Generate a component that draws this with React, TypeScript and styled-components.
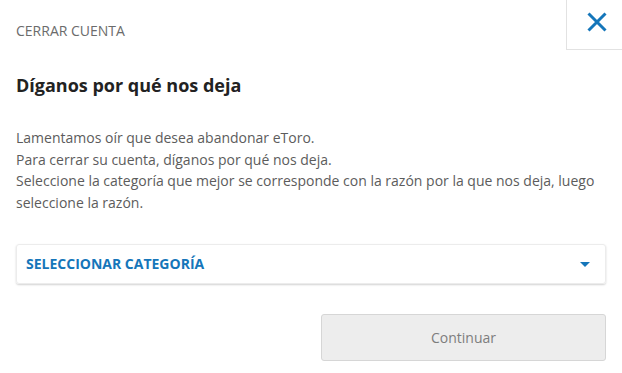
import React from "react";
import styled, { createGlobalStyle } from "styled-components";

const GlobalStyle = createGlobalStyle`
    html, body {
        margin: 0;
        padding: 0;
        background: #ffffff;
        font-family: "Open Sans", "Noto Sans", sans-serif;
    }
`;

const Page = styled.div`
    width: 622px;
    min-height: 373px;
    display: flex;
    flex-direction: column;
`;

const Header = styled.div`
    display: flex;
    justify-content: space-between;
    align-items: flex-start;
    height: 50px;
`;

const HeaderTitle = styled.div`
    padding: 21px 0 0 16px;
    font-size: 14px;
    line-height: 19px;
    color: #6b6b6b;
    text-transform: uppercase;
`;

const CloseButton = styled.button`
    width: 56px;
    height: 50px;
    box-sizing: border-box;
    border: none;
    border-left: 1px solid #e2e2e2;
    border-bottom: 1px solid #e2e2e2;
    background: #fff;
    display: flex;
    align-items: flex-start;
    justify-content: center;
    padding: 12px 0 0 4px;
    cursor: pointer;
`;

const Body = styled.div`
    padding: 0 16px;
    display: flex;
    flex-direction: column;
`;

const Heading = styled.h2`
    margin: 22px 0 0;
    font-size: 18px;
    line-height: 26px;
    font-weight: 700;
    color: #222;
`;

const Text = styled.p`
    margin: 29px 0 0;
    font-size: 14px;
    line-height: 21.7px;
    color: #5c5c5c;
`;

const Select = styled.div`
    margin-top: 30px;
    height: 40px;
    box-sizing: border-box;
    border: 1px solid #ececec;
    border-radius: 3px;
    box-shadow: 0 1px 2px rgba(0, 0, 0, 0.18);
    display: flex;
    align-items: center;
    justify-content: space-between;
    padding: 0 15px 0 9px;
    cursor: pointer;
`;

const SelectLabel = styled.span`
    font-size: 14px;
    font-weight: 700;
    color: #1576ba;
    text-transform: uppercase;
`;

const Caret = styled.span`
    width: 0;
    height: 0;
    border-left: 5px solid transparent;
    border-right: 5px solid transparent;
    border-top: 5px solid #1576ba;
    margin-top: 2px;
`;

const Actions = styled.div`
    display: flex;
    justify-content: flex-end;
    margin-top: 30px;
`;

const ContinueButton = styled.button`
    width: 285px;
    height: 47px;
    box-sizing: border-box;
    border: 1px solid #d6d6d6;
    border-radius: 3px;
    background: #ededed;
    color: #7d7d7d;
    font-family: "Open Sans", "Noto Sans", sans-serif;
    font-size: 14px;
    cursor: default;
`;

function App() {
    return (
        <Page>
            <GlobalStyle/>
            <Header>
                <HeaderTitle>Cerrar cuenta</HeaderTitle>
                <CloseButton aria-label="Cerrar">
                    <svg width="20" height="20" viewBox="0 0 20 20">
                        <path d="M1.5 1.5 L18.5 18.5 M18.5 1.5 L1.5 18.5" stroke="#1576ba" strokeWidth="3"
                              fill="none"/>
                    </svg>
                </CloseButton>
            </Header>
            <Body>
                <Heading>Díganos por qué nos deja</Heading>
                <Text>
                    Lamentamos oír que desea abandonar eToro.<br/>
                    Para cerrar su cuenta, díganos por qué nos deja.<br/>
                    Seleccione la categoría que mejor se corresponde con la razón por la que nos deja, luego
                    seleccione la razón.
                </Text>
                <Select>
                    <SelectLabel>Seleccionar categoría</SelectLabel>
                    <Caret/>
                </Select>
                <Actions>
                    <ContinueButton disabled>Continuar</ContinueButton>
                </Actions>
            </Body>
        </Page>
    );
}

export default App;
